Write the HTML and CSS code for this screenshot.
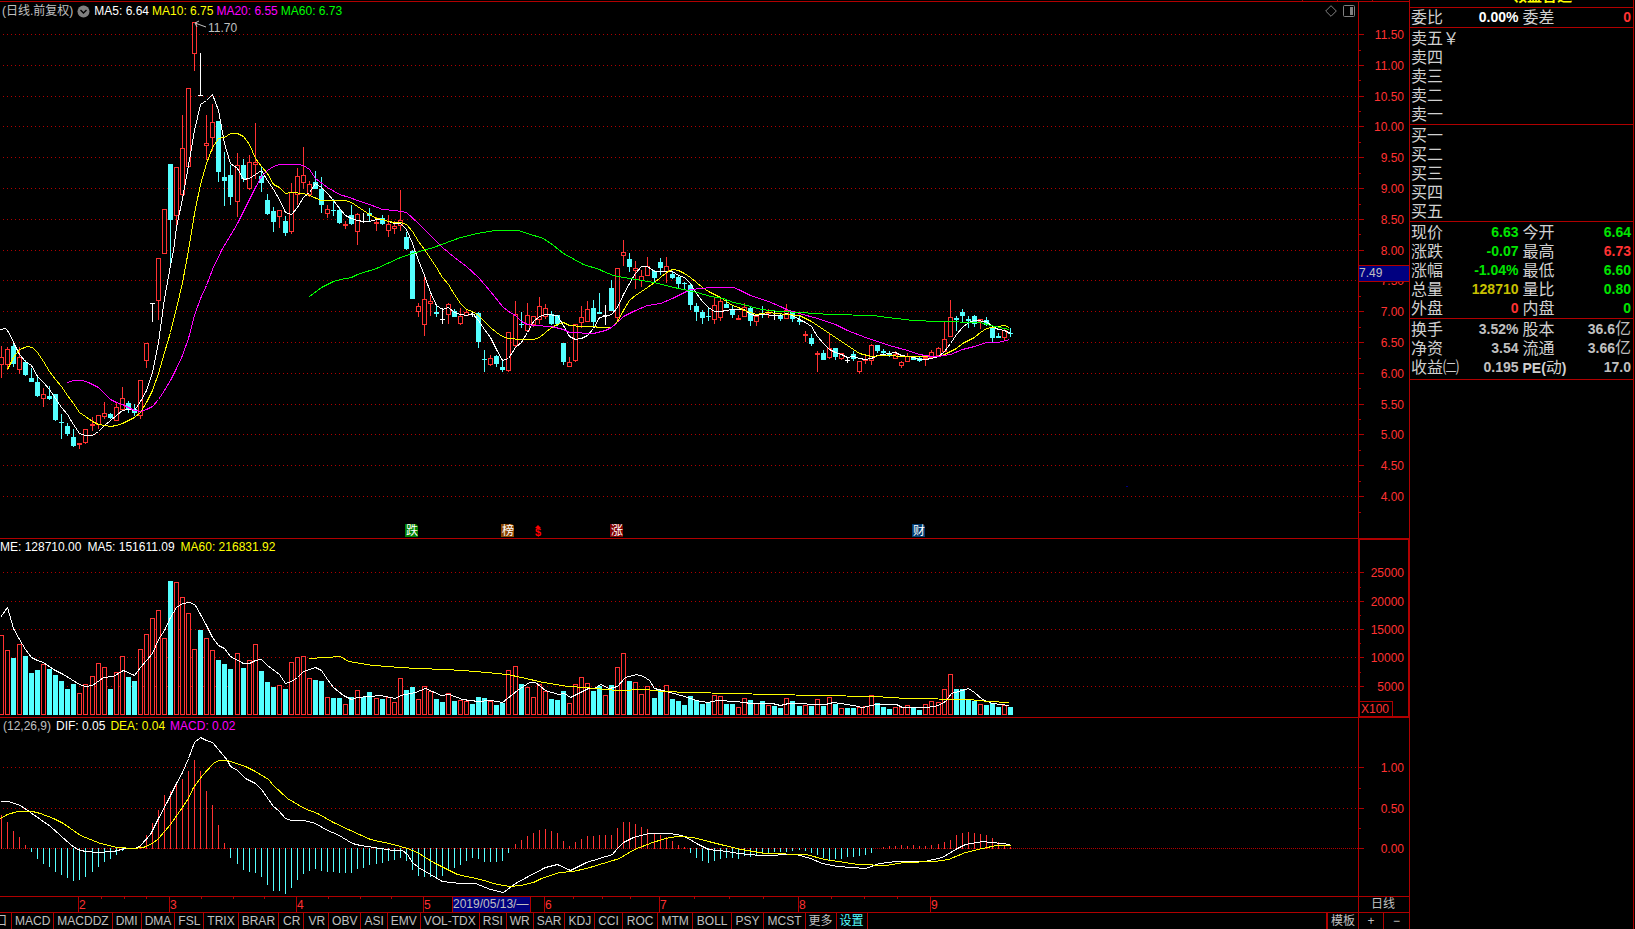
FILE: index.html
```html
<!DOCTYPE html>
<html lang="zh-CN">
<head>
<meta charset="utf-8">
<title>日线</title>
<link rel="stylesheet" href="styles.css">
</head>
<body>
<div class="terminal">
  <main class="charts">
    <div class="top-strip"><i></i><i></i><i></i></div>

    <section class="row row-price">
      <div class="pane">
        <svg class="plot" id="price"></svg>
        <header class="legend">
          <span class="muted">(日线.前复权)</span>
          <button class="icon-btn" aria-label="均线菜单"><svg width="13" height="13" viewBox="0 0 13 13"><circle cx="6.5" cy="6.5" r="6" fill="#808080"/><path d="M3.5 5l3 3 3-3" fill="none" stroke="#000" stroke-width="1.4"/></svg></button>
          <span class="white">MA5: 6.64</span>
          <span class="yellow">MA10: 6.75</span>
          <span class="magenta">MA20: 6.55</span>
          <span class="green">MA60: 6.73</span>
          <span class="tools">
            <button class="icon-btn" aria-label="标记"><svg width="12" height="12" viewBox="0 0 12 12"><path d="M6 .7L11.3 6 6 11.3.7 6z" fill="none" stroke="#808080"/></svg></button>
            <button class="icon-btn" aria-label="侧栏"><svg width="12" height="12" viewBox="0 0 12 12"><rect x=".5" y=".5" width="11" height="11" rx="1" fill="none" stroke="#808080"/><rect x="7" y="2" width="3" height="8" fill="#808080"/></svg></button>
          </span>
        </header>
      </div>
      <div class="axis">
        <svg class="plot" id="price-axis"></svg>
        <output class="cursor-price">7.49</output>
      </div>
    </section>

    <section class="row row-sub">
      <div class="pane">
        <svg class="plot" id="volume"></svg>
        <header class="legend legend-volume">
          <span class="white">ME: 128710.00</span>
          <span class="white">MA5: 151611.09</span>
          <span class="yellow">MA60: 216831.92</span>
        </header>
      </div>
      <div class="axis axis-active">
        <svg class="plot" id="volume-axis"></svg>
        <span class="unit">X100</span>
      </div>
    </section>

    <section class="row row-sub">
      <div class="pane">
        <svg class="plot" id="macd"></svg>
        <header class="legend legend-macd">
          <span class="muted">(12,26,9)</span>
          <span class="white">DIF: 0.05</span>
          <span class="yellow">DEA: 0.04</span>
          <span class="magenta">MACD: 0.02</span>
        </header>
      </div>
      <div class="axis"><svg class="plot" id="macd-axis"></svg></div>
    </section>

    <section class="row row-dates">
      <div class="pane"><svg class="plot" id="dates"></svg></div>
      <div class="axis period">日线</div>
    </section>

    <nav class="indicators">
      <button class="first">口</button><button>MACD</button><button>MACDDZ</button><button>DMI</button><button>DMA</button><button>FSL</button><button>TRIX</button><button>BRAR</button><button class="roomy">CR</button><button class="roomy">VR</button><button>OBV</button><button>ASI</button><button>EMV</button><button>VOL-TDX</button><button>RSI</button><button>WR</button><button>SAR</button><button>KDJ</button><button>CCI</button><button class="roomy">ROC</button><button class="roomy">MTM</button><button class="roomy">BOLL</button><button class="roomy">PSY</button><button class="roomy">MCST</button><button>更多</button><button class="active">设置</button>
      <button class="template">模板</button><button class="zoom">+</button><button class="zoom">−</button>
    </nav>
  </main>

  <aside class="quote">
    <div class="name">领益智造</div>
    <div class="block ratio">
      <div class="line"><span>委比</span><b class="white">0.00%</b><span>委差</span><b class="red">0</b></div>
    </div>
    <div class="block">
      <div class="line"><span>卖五￥</span></div>
      <div class="line"><span>卖四</span></div>
      <div class="line"><span>卖三</span></div>
      <div class="line"><span>卖二</span></div>
      <div class="line"><span>卖一</span></div>
    </div>
    <div class="block">
      <div class="line"><span>买一</span></div>
      <div class="line"><span>买二</span></div>
      <div class="line"><span>买三</span></div>
      <div class="line"><span>买四</span></div>
      <div class="line"><span>买五</span></div>
    </div>
    <div class="block">
      <div class="line"><span>现价</span><b class="up">6.63</b><span>今开</span><b class="up">6.64</b></div>
      <div class="line"><span>涨跌</span><b class="up">-0.07</b><span>最高</span><b class="red">6.73</b></div>
      <div class="line"><span>涨幅</span><b class="up">-1.04%</b><span>最低</span><b class="up">6.60</b></div>
      <div class="line"><span>总量</span><b class="gold">128710</b><span>量比</span><b class="up">0.80</b></div>
      <div class="line"><span>外盘</span><b class="red">0</b><span>内盘</span><b class="up">0</b></div>
    </div>
    <div class="block last">
      <div class="line"><span>换手</span><b>3.52%</b><span>股本</span><b>36.6<em>亿</em></b></div>
      <div class="line"><span>净资</span><b>3.54</b><span>流通</span><b>3.66<em>亿</em></b></div>
      <div class="line"><span>收益㈡</span><b>0.195</b><span><b>PE(</b>动<b>)</b></span><b>17.0</b></div>
    </div>
  </aside>
</div>
<script src="chart.js"></script>
</body>
</html>
```
FILE: styles.css
```css
* { box-sizing: border-box; }
body {
  margin: 0;
  background: #000;
  color: #c0c0c0;
  font: 12px/16px "Liberation Sans", "Noto Sans CJK SC", sans-serif;
}
button {
  margin: 0;
  padding: 0;
  border: 0;
  background: none;
  color: inherit;
  font: inherit;
}
.terminal {
  display: grid;
  grid-template-columns: minmax(0, 1fr) 225px;
  height: 100vh;
  padding-right: 1px;
  overflow: hidden;
}
.charts {
  display: grid;
  grid-template-rows: 2px minmax(0, 537fr) minmax(0, 179fr) minmax(0, 179fr) 16px 16px;
  min-width: 0;
}
.top-strip {
  display: flex;
  justify-content: flex-end;
  gap: 34px;
  padding-right: 36px;
  border-bottom: 1px solid #b00000;
}
.top-strip i { width: 1px; background: #b00000; }

.row {
  display: grid;
  grid-template-columns: minmax(0, 1fr) 51px;
  border-bottom: 1px solid #b00000;
  min-height: 0;
}
.pane, .axis { display: grid; min-height: 0; min-width: 0; }
.pane > *, .axis > * { grid-area: 1 / 1; }
.axis { border-left: 1px solid #b00000; }
.axis-active { box-shadow: inset 0 0 0 1px #b00000; }
.plot { display: block; width: 100%; height: 100%; min-height: 0; overflow: hidden; }
.plot text { font-size: 12px; }

.legend {
  display: flex;
  align-items: center;
  align-self: start;
  gap: 3px;
  height: 18px;
  padding-left: 2px;
  z-index: 1;
  white-space: nowrap;
}
.legend-volume { gap: 6px; padding-left: 0; height: 16px; }
.legend-macd { gap: 5px; padding-left: 3px; height: 16px; }
.icon-btn { display: flex; padding: 0 1px; }
.tools { display: flex; gap: 4px; margin-left: auto; padding-right: 2px; }

.muted { color: #c0c0c0; }
.white { color: #fff; }
.yellow { color: #ff0; }
.magenta { color: #f0f; }
.green { color: #0f0; }
.red { color: #ff3232; }
.up { color: #00e600; }
.gold { color: #c8c000; }

.cursor-price {
  align-self: start;
  margin-top: 263px;
  height: 17px;
  line-height: 15px;
  border: solid #b00000;
  border-width: 1px 0;
  background: #000080;
  z-index: 1;
}
.unit {
  place-self: end start;
  height: 16px;
  padding: 0 3px 0 1px;
  border: 1px solid #b00000;
  color: #ff3232;
  line-height: 14px;
}
.period { place-items: center; padding-right: 2px; line-height: 15px; }

.indicators { display: flex; line-height: 16px; white-space: nowrap; overflow: hidden; }
.indicators button { padding: 0 3px; border-right: 1px solid #b00000; flex: none; }
.indicators .roomy { padding-left: 4px; }
.indicators .first { width: 12px; padding: 0 4px 0 0; direction: rtl; overflow: hidden; }
.indicators .active { color: #54ffff; }
.indicators .template { margin-left: auto; border-left: 2px solid #b00000; }
.indicators .zoom { width: 25px; }
.indicators .zoom:last-child { border-right: 0; }

.quote {
  border: solid #b00000;
  border-width: 0 1px;
  font-size: 16px;
  line-height: 19px;
  overflow: hidden;
}
.name {
  display: flex;
  align-items: flex-end;
  height: 7px;
  padding: 0 0 2px 102px;
  color: #ff0;
  font-size: 15px;
  font-weight: 700;
  overflow: hidden;
}
.block { padding: 1px 1px 0; border-top: 1px solid #b00000; }
.ratio { padding-top: 0; }
.last { padding-bottom: 2px; border-bottom: 1px solid #b00000; }
.line {
  display: grid;
  grid-template-columns: 52px 1fr 52px 1fr;
  column-gap: 2px;
  height: 19px;
  white-space: nowrap;
}
.line > span { color: #d0d0d0; }
.line > b { text-align: right; padding-right: 1px; }
.line > b:nth-child(2) { padding-right: 2px; }
.line b { font-size: 14px; font-weight: 700; }
.line em { font-size: 16px; font-style: normal; font-weight: 400; line-height: 16px; }
```
FILE: chart.js
```js
const NS = "http://www.w3.org/2000/svg";
const RED = "#ff3232", CYAN = "#54ffff", LINE = "#b00000", WHITE = "#ffffff";
const BASE_W = 1358;

// One entry per day: kind, high, body top, body bottom, low, volume top.
// r = rising, c = falling, w / W = flat (falling / rising volume).
const days = `
r346,357,364,377,635 r347,349,364,369,650 c341,346,363,366,658 r347,357,369,373,644 c360,362,374,375,656 c368,378,381,381,673 c377,382,395,396,670 r388,394,398,406,664
c386,396,398,399,669 c394,394,419,420,675 c414,422,422,438,681 c423,426,433,435,689 c429,437,445,446,684 r443,443,444,448,693 r429,429,442,443,684 r417,424,425,430,676
r415,415,424,428,663 r402,413,416,418,667 c413,414,417,418,689 r403,407,420,420,672 r387,398,409,410,656 c401,403,408,412,677 c404,409,412,415,681 r380,380,415,418,649
r343,343,360,367,634 W303,303,303,321,618 r258,258,300,319,610 r209,209,253,253,638 c164,164,219,262,581 r167,167,215,229,582 r115,148,194,198,597 r88,88,166,166,613
r22,22,53,70,649 w53,95,95,95,630 r115,143,145,159,638 r104,122,137,150,650 c121,121,171,181,660 c152,177,180,205,664 c165,175,196,204,669 r153,165,201,216,653
c159,165,178,181,668 r155,162,188,189,660 r123,162,164,178,644 c167,176,182,191,671 c194,200,213,214,682 c207,211,221,231,687 r210,210,216,227,685 c216,221,232,235,689
r183,192,231,233,662 r168,176,194,204,657 r147,175,182,188,656 r181,184,194,196,678 c171,182,188,188,680 c177,189,204,212,681 r205,209,213,217,697 c199,210,210,215,698
c207,210,222,223,698 r221,224,225,228,704 c205,215,223,224,697 r213,214,231,244,690 w213,221,221,222,697 c208,213,215,220,692 r217,222,223,230,698 c215,218,223,224,699
r215,224,230,236,697 r221,226,228,233,702 r190,220,225,230,678 c232,237,248,249,690 c250,251,298,298,687 r303,306,311,316,699 r277,299,324,335,686 r295,301,303,315,691
c306,312,313,316,699 w308,319,319,323,702 r303,304,314,323,693 c309,311,316,316,701 r308,316,323,324,700 r309,312,315,315,701 w312,314,314,316,704 c312,313,341,347,697
c350,359,359,371,698 r355,358,364,365,701 c355,356,363,366,705 c360,367,369,371,703 r332,332,370,371,670 r301,314,345,347,666 c312,324,324,327,684 r303,315,330,330,687
r316,316,324,326,697 r297,306,319,323,684 r304,308,316,318,691 c311,314,323,324,699 c315,315,323,325,700 c343,343,361,364,691 r357,362,366,366,703 r324,324,360,361,684
r306,317,322,327,677 r301,309,321,321,683 c300,308,321,325,691 c293,312,313,313,686 W305,315,315,324,695 c280,288,310,310,685 r268,268,317,320,667 r240,252,255,265,653
c253,259,266,271,681 r261,268,270,288,682 r270,276,280,286,694 r257,266,275,275,686 c270,271,277,282,698 c258,262,267,274,690 r257,266,271,282,685 c271,274,277,278,699
c275,277,283,287,701 c282,283,283,289,705 c283,285,304,309,696 c303,306,311,320,700 c310,312,317,323,704 c307,316,316,320,702 r298,305,319,323,695 r298,301,317,320,696
c300,304,307,307,704 c305,309,314,317,704 r315,318,319,319,707 r303,307,316,316,698 c307,308,320,325,700 r315,316,321,325,703 c306,313,313,317,701 r309,312,313,317,705
w311,315,315,319,706 c314,315,318,320,708 r304,310,318,318,698 c311,312,318,321,701 c316,320,321,324,706 r331,334,335,341,705 c334,338,343,345,706 r351,353,354,371,699
c350,353,359,359,706 r334,348,357,358,697 c348,348,356,359,704 r353,353,358,359,708 w357,360,360,362,708 c351,354,358,360,708 r361,361,371,373,707 r356,359,360,363,706
r344,345,360,364,695 c345,345,350,352,703 c349,351,352,354,707 c351,353,355,356,709 r351,354,358,358,707 r361,362,365,367,707 r353,356,361,361,705 c357,357,359,359,707
c357,358,360,361,710 r355,357,358,365,704 r350,352,357,357,701 r347,348,355,355,702 r321,339,351,351,689 r300,317,336,336,674 c316,318,319,330,689 c309,312,315,321,689
c316,319,320,327,699 c315,316,323,326,701 r319,319,321,328,704 c317,320,324,325,705 c326,327,337,341,703 c333,336,337,337,707 r329,330,337,340,705 c328,333,333,336,707`
  .trim().split(/\s+/).map(s => [s[0], ...s.slice(1).split(",").map(Number)]);

const histogram = `815 822 831 837 845 851 858 863 866 871 874 877 880 879 876 871 866 861 858 854 850 848 848 845 835 823 810 795 791 783 779 771 760 771 791 805 825 843
857 863 869 871 872 876 884 890 890 893 887 879 873 870 868 870 871 871 872 872 872 868 867 864 863 862 860 859 857 860 869 875 876 876 876 875 870 867 864 860 857 858 861 861 861 860 852
844 840 836 833 830 829 831 833 841 846 842 839 836 836 835 835 835 828 822 822 824 827 829 833 835 837 841 845 847 852 857 860 862 860 858 857 857 858 855 856 855 853 852 851 851 851 850 849
850 852 854 857 859 858 858 856 856 855 854 852 848 847 846 846 845 846 845 846 846 845 844 842 840 835 833 832 833 834 835 838 842 845 847`
  .split(/\s+/).map(Number);

const lines = {
  ma5: "0,329 5,328 7,330 11,337 13,342 17,350 19,354 25,361 31,365 37,376 43,382 49,389 55,398 61,407 67,414 73,424 79,433 85,435 92,435 98,431 104,425 110,420 116,415 122,410 128,409 134,410 140,401 146,390 152,372 158,342 164,298 170,265 173,250 176,227 182,198 188,165 194,130 200,104 206,100 212,94 218,110 224,143 230,163 237,168 243,179 249,178 255,174 261,170 267,180 273,189 279,199 285,212 291,214 297,207 303,197 309,192 315,183 321,187 327,193 333,200 339,208 345,215 351,218 357,220 363,221 369,221 376,219 382,219 388,221 394,223 400,223 406,229 412,243 418,260 424,275 430,292 436,305 442,309 448,307 454,312 460,314 466,315 472,313 478,320 484,329 490,337 496,349 502,360 508,358 515,347 521,342 527,332 533,321 539,316 545,314 557,315 563,325 569,336 575,339 581,338 587,335 593,328 599,317 605,316 611,314 617,307 623,294 629,283 635,273 641,266 647,266 654,271 672,271 678,275 684,277 690,283 696,293 702,301 708,307 714,311 720,311 732,309 744,309 750,314 756,315 762,314 774,315 780,315 786,313 792,315 799,319 805,322 811,326 817,336 823,343 829,349 835,352 841,354 847,357 853,356 859,358 865,359 871,358 877,355 883,354 889,353 895,352 901,355 907,356 913,357 919,359 925,359 931,358 938,356 944,351 950,343 956,334 962,327 968,322 974,320 986,321 992,326 998,329 1004,330 1010,333",
  ma10: "7,369 13,357 19,349 27,346 32,347 37,352 43,361 49,371 55,379 61,386 67,395 73,403 79,412 85,416 92,421 98,424 104,425 110,426 116,425 122,423 128,420 134,417 140,412 146,402 152,390 158,373 164,352 170,332 176,308 182,282 188,250 194,213 200,184 206,163 212,147 218,138 224,137 230,133 237,133 243,136 249,144 255,158 261,166 267,173 273,184 279,187 285,193 291,192 303,193 309,195 321,200 333,200 345,200 351,202 357,206 363,210 369,214 376,218 382,219 388,221 394,222 400,222 406,224 412,231 418,241 424,249 430,258 436,267 442,277 448,284 454,294 460,303 466,309 472,311 478,315 484,321 490,327 496,332 502,336 508,338 521,339 533,339 539,337 545,332 551,327 557,324 563,322 569,325 581,326 593,326 599,327 611,327 617,321 623,310 629,300 635,295 641,291 647,287 654,282 660,277 666,272 672,269 678,270 684,273 690,277 696,282 702,287 708,291 720,297 726,301 732,305 738,307 744,310 750,312 756,314 768,312 786,314 799,315 805,318 811,321 823,329 835,337 847,345 859,353 871,356 883,355 907,356 925,356 938,356 944,354 950,351 956,348 962,343 974,337 980,332 986,328 992,327 1004,325 1009,327",
  ma20: "67,382 73,380 82,380 88,382 98,387 104,393 110,399 116,402 122,404 128,407 134,410 140,411 146,409 152,406 158,399 164,390 170,380 176,368 182,355 188,338 194,315 200,298 206,285 212,269 221,250 230,235 237,223 249,199 255,187 261,176 267,170 273,166 279,164 297,164 303,165 309,169 315,178 327,187 339,194 349,197 357,200 369,204 382,209 394,210 406,212 418,223 430,235 442,247 454,257 466,266 478,277 490,291 502,306 508,311 515,315 521,321 527,324 533,325 551,326 563,329 569,332 593,333 605,330 611,327 617,322 623,316 635,310 647,305 660,303 672,298 678,295 684,292 690,289 711,287 733,287 738,289 750,295 768,301 780,306 786,309 799,313 817,318 835,324 847,330 865,337 889,345 907,350 919,354 931,356 938,356 950,354 962,349 974,346 986,342 998,342 1009,339",
  ma60: "309,296 321,287 333,281 340,279 351,277 357,274 376,268 400,257 412,253 433,247 460,237 477,233 495,230 518,230 527,233 543,238 553,245 563,253 583,264 599,269 603,271 613,275 623,277 653,282 678,288 697,292 710,296 723,298 733,302 743,304 757,308 768,310 780,311 800,312 830,314 873,315 887,317 913,320 937,321 980,322 990,325 1009,329",
  vol5: "0,617 7,607 13,628 19,639 25,649 31,657 37,660 43,662 53,669 63,674 79,684 85,686 92,685 103,677 113,676 123,670 134,675 140,667 146,660 152,653 158,639 164,630 170,617 176,607 182,603 190,602 195,605 200,614 206,625 212,637 218,645 224,648 230,656 243,663 249,663 255,660 261,659 267,665 279,674 285,683 291,681 297,677 303,671 315,667 321,670 327,679 333,687 343,695 351,699 357,697 380,695 395,698 400,695 415,692 425,688 441,695 449,694 462,699 478,701 490,700 502,702 517,690 529,682 535,682 545,690 558,694 564,693 570,697 580,692 588,688 594,688 600,684 609,688 617,686 625,677 636,674 643,676 649,680 654,688 670,692 684,696 696,700 707,702 717,700 735,701 751,703 772,703 780,705 788,703 825,704 833,702 853,705 862,707 876,704 896,704 902,707 927,707 938,705 945,701 951,693 958,691 968,688 974,692 982,699 992,703 1009,705",
  vol60: "309,658 325,657 340,656 348,661 373,665 387,666 400,667 417,668 445,669 462,670 486,672 507,674 521,677 543,682 568,686 584,687 617,690 645,689 662,691 690,692 731,693 772,694 817,695 874,696 907,698 968,699 988,701 1009,702",
  dif: "0,801 8,801 20,805 30,812 40,819 50,826 60,835 70,844 77,849 85,851 97,852 113,851 125,848 135,848 140,845 150,834 158,818 167,801 176,783 182,772 188,758 194,742 200,737 206,740 212,742 218,749 227,760 230,766 237,770 245,778 255,783 261,789 273,806 278,810 285,818 291,820 304,820 315,823 327,830 337,834 352,843 360,845 380,848 393,850 402,850 407,854 412,862 418,867 430,874 442,881 460,883 475,883 490,889 503,892 515,883 526,877 545,867 557,864 570,870 586,862 612,854 617,848 623,842 633,837 648,833 669,833 681,835 688,838 696,843 708,849 727,851 738,853 760,855 796,854 810,858 822,863 837,866 865,868 879,863 896,861 924,861 942,857 955,849 965,844 982,841 1010,844",
  dea: "0,818 7,814 17,811 32,811 40,813 53,818 63,823 80,835 100,843 117,847 133,848 143,847 152,843 158,838 170,824 177,814 188,798 193,787 202,775 213,763 218,760 227,760 245,766 255,771 268,779 273,785 287,798 304,808 317,813 333,822 350,830 370,839 393,844 407,848 417,852 433,862 457,874 480,879 497,884 510,886 520,885 533,882 541,878 559,872 572,871 586,868 619,858 634,849 652,842 669,837 679,836 693,837 708,841 724,845 741,849 765,853 806,854 824,859 858,864 886,865 903,862 934,861 948,859 965,852 982,848 996,845 1010,845"
};

function make(svg, tag, attrs, text) {
  const el = document.createElementNS(NS, tag);
  for (const k in attrs) el.setAttribute(k, attrs[k]);
  if (text !== undefined) el.textContent = text;
  svg.appendChild(el);
  return el;
}

// Clears an svg and returns its scales for a pane with the given origin and nominal height.
function open(id, top, height) {
  const svg = document.getElementById(id);
  svg.replaceChildren();
  const w = svg.clientWidth, h = svg.clientHeight;
  return {
    svg, w, h,
    x: v => Math.round(v * w / BASE_W),
    y: v => Math.round((v - top) * h / height)
  };
}
const dayX = i => Math.floor(1.36 + 6.043 * i);
const box = (p, x, y, w, h, fill) =>
  make(p.svg, "rect", { x, y, width: w, height: Math.max(h, 1), fill, "shape-rendering": "crispEdges" });
const frame = (p, x, y, w, h) =>
  make(p.svg, "rect", { x: x + 0.5, y: y + 0.5, width: w - 1, height: Math.max(h - 1, 1), fill: "#000", stroke: RED, "shape-rendering": "crispEdges" });

function curve(p, data, color) {
  const points = data.split(" ").map(s => {
    const [x, y] = s.split(",").map(Number);
    return (p.x(x) + 0.5) + "," + (p.y(y) + 0.5);
  }).join(" ");
  make(p.svg, "polyline", { points, fill: "none", stroke: color, "shape-rendering": "crispEdges" });
}
function gridLines(p, rows, dash = "1 3") {
  rows.forEach(r => make(p.svg, "line", {
    x1: 3, x2: p.w, y1: p.y(r) + 0.5, y2: p.y(r) + 0.5, stroke: LINE, "stroke-dasharray": dash, "shape-rendering": "crispEdges"
  }));
}
function scale(p, labels, minors) {
  labels.forEach(([row, label]) => {
    box(p, 0, p.y(row), 5, 1, LINE);
    make(p.svg, "text", { x: p.w - 5, y: p.y(row) + 5, "text-anchor": "end", fill: RED }, label);
  });
  minors.forEach(row => box(p, 0, p.y(row), 2, 1, LINE));
}

function badge(p, x, label, color) {
  const left = p.x(x), top = p.y(524);
  make(p.svg, "path", { d: `M${left} ${top}h11l2 2v11h-13z`, fill: color });
  make(p.svg, "text", { x: left + 1, y: top + 11, fill: WHITE }, label);
}

function drawPrice() {
  const rows = Array.from({ length: 16 }, (_, i) => 34 + i * 30.8);
  const p = open("price", 2, 536);
  gridLines(p, rows);
  days.forEach(([kind, high, top, bottom, low], i) => {
    const cx = p.x(dayX(i)), color = kind === "r" ? RED : kind === "c" ? CYAN : WHITE;
    const t = p.y(top), b = p.y(bottom);
    box(p, cx, p.y(high), 1, p.y(low) - p.y(high) + 1, color);
    if (kind === "r" && b - t > 1) frame(p, cx - 2, t, 5, b - t + 1);
    else box(p, cx - 2, t, 5, b - t + 1, color);
  });
  curve(p, lines.ma5, WHITE);
  curve(p, lines.ma10, "#ffff00");
  curve(p, lines.ma20, "#ff00ff");
  curve(p, lines.ma60, "#00ff00");

  const ax = p.x(194), ay = p.y(23);
  make(p.svg, "path", { d: `M${ax + 12} ${ay + 4}l-11-4m4-2l-4 2 2 4`, fill: "none", stroke: "#c0c0c0" });
  make(p.svg, "text", { x: ax + 14, y: ay + 9, fill: "#c0c0c0" }, "11.70");

  badge(p, 405, "跌", "#008000");
  badge(p, 501, "榜", "#8a4500");
  badge(p, 610, "涨", "#800000");
  badge(p, 912, "财", "#003a70");
  const dx = p.x(535), dy = p.y(526);
  make(p.svg, "path", { d: `M${dx} ${dy + 2}l3-3 3 3z`, fill: "#ff0000" });
  make(p.svg, "text", { x: dx, y: dy + 10, fill: "#ff0000", style: "font-size:11px;font-weight:700" }, "$");
  box(p, p.x(1126), p.y(486), 2, 1, "#000080");

  const a = open("price-axis", 2, 536);
  scale(a, rows.map((r, i) => [r, (11.5 - i * 0.5).toFixed(2)]), rows.map(r => r + 15.5));
}

function drawVolume() {
  const rows = [572, 601, 629, 657, 686];
  const p = open("volume", 539, 178);
  gridLines(p, rows);
  const base = p.y(715);
  days.forEach((d, i) => {
    const cx = p.x(dayX(i)), t = p.y(d[5]);
    if (d[0] === "r" || d[0] === "W") frame(p, cx - 2, t, 5, base - t);
    else box(p, cx - 2, t, 5, base - t, CYAN);
  });
  curve(p, lines.vol5, WHITE);
  curve(p, lines.vol60, "#ffff00");
  const a = open("volume-axis", 539, 178);
  scale(a, rows.map((r, i) => [r, String(25000 - i * 5000)]), [587, 615, 643, 672]);
}

function drawMacd() {
  const p = open("macd", 718, 178);
  gridLines(p, [767, 808]);
  gridLines(p, [848], "1 1");
  const zero = p.y(848);
  histogram.forEach((v, i) => {
    const y = p.y(v);
    if (y !== zero) box(p, p.x(dayX(i)), Math.min(y, zero), 1, Math.abs(y - zero) + 1, y < zero ? RED : CYAN);
  });
  curve(p, lines.dif, WHITE);
  curve(p, lines.dea, "#ffff00");
  const a = open("macd-axis", 718, 178);
  scale(a, [[767, "1.00"], [808, "0.50"], [848, "0.00"]], [788, 828]);
}

function drawDates() {
  const p = open("dates", 0, 15);
  [[78, 2], [169, 3], [296, 4], [423, 5], [544, 6], [659, 7], [798, 8], [930, 9]].forEach(([x, m]) => {
    box(p, p.x(x), 0, 1, 15, LINE);
    make(p.svg, "text", { x: p.x(x) + 1, y: 12, fill: RED }, m);
  });
  [101, 124, 146, 201, 233, 264, 328, 360, 391, 573, 602, 630, 694, 729, 763, 831, 864, 897]
    .forEach(x => box(p, p.x(x), 0, 1, 2, LINE));
  const left = p.x(452);
  box(p, left, 0, 79, 15, LINE);
  box(p, left + 1, 0, 77, 15, "#000080");
  make(p.svg, "text", { x: left + 1, y: 11, fill: "#c0c0c0" }, "2019/05/13/—");
}

function draw() {
  drawPrice();
  drawVolume();
  drawMacd();
  drawDates();
}
draw();
window.addEventListener("resize", draw);
```
